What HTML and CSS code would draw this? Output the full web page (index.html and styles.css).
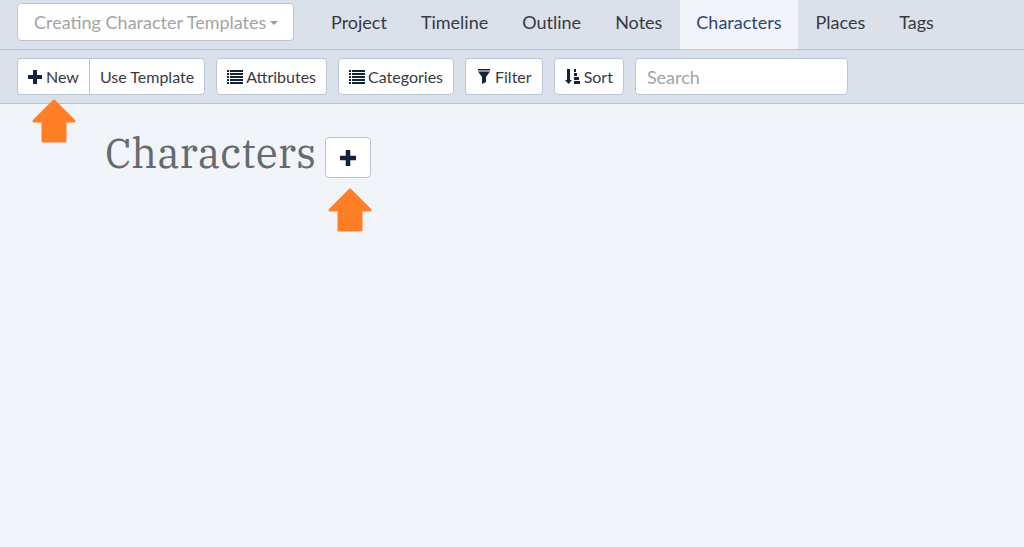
FILE: index.html
```html
<!DOCTYPE html>
<html lang="en">
<head>
  <meta charset="UTF-8">
  <title>Characters</title>
  <link rel="stylesheet" href="styles.css">
</head>
<body>
  <!-- shared icons -->
  <svg class="icon-defs" aria-hidden="true">
    <symbol id="icon-plus" viewBox="0 0 14 14">
      <path d="M5.5 0h3q.5 0 .5.5V5h4.500q.5 0 .5.5v3q0 .5-.5.5H9v4.500q0 .5-.5.5h-3q-.5 0-.5-.5V9H.5Q0 9 0 8.500v-3Q0 5 .5 5H5V.5Q5 0 5.500 0z"/>
    </symbol>
    <symbol id="icon-list" viewBox="0 0 16 14">
      <path d="M0 0h2v2H0zM3 0h13v2H3zM0 3h2v2H0zM3 3h13v2H3zM0 6h2v2H0zM3 6h13v2H3zM0 9h2v2H0zM3 9h13v2H3zM0 12h2v2H0zM3 12h13v2H3z"/>
    </symbol>
    <symbol id="icon-filter" viewBox="0 0 14 16">
      <path d="M1 0h12v1.500H1zM1 2.500h12L9 8v5l-4 2V8z"/>
    </symbol>
    <symbol id="icon-sort" viewBox="0 0 16 16">
      <path d="M2 0h3v11h2l-3.500 4L0 11h2zM9 0h2v3H9zM9 4h3v3H9zM9 8h5v3H9zM9 12h6v3H9z"/>
    </symbol>
    <symbol id="icon-arrow" viewBox="0 0 44 44">
      <path d="M22 2L42 22H33V42H11V22H2z" stroke="#ff7f27" stroke-width="3" stroke-linejoin="round"/>
    </symbol>
  </svg>

  <nav class="navbar">
    <div class="project-picker">
      <select aria-label="Project file">
        <option>Creating Character Templates</option>
      </select>
      <span class="caret"></span>
    </div>
    <div class="nav-links">
      <a href="#project">Project</a>
      <a href="#timeline">Timeline</a>
      <a href="#outline">Outline</a>
      <a href="#notes">Notes</a>
      <a href="#characters" class="active">Characters</a>
      <a href="#places">Places</a>
      <a href="#tags">Tags</a>
    </div>
  </nav>

  <div class="toolbar">
    <div class="btn-group">
      <button type="button" class="btn"><svg class="icon plus"><use href="#icon-plus"/></svg>New</button>
      <button type="button" class="btn">Use Template</button>
      <svg class="arrow arrow-new"><use href="#icon-arrow"/></svg>
    </div>
    <button type="button" class="btn"><svg class="icon list"><use href="#icon-list"/></svg>Attributes</button>
    <button type="button" class="btn"><svg class="icon list"><use href="#icon-list"/></svg>Categories</button>
    <button type="button" class="btn"><svg class="icon filter"><use href="#icon-filter"/></svg>Filter</button>
    <button type="button" class="btn"><svg class="icon sort"><use href="#icon-sort"/></svg>Sort</button>
    <input type="text" class="search" placeholder="Search" aria-label="Search">
  </div>

  <main>
    <h1>Characters</h1>
    <div class="add-character">
      <button type="button" class="btn add-btn" aria-label="Add character"><svg class="icon"><use href="#icon-plus"/></svg></button>
      <svg class="arrow arrow-add"><use href="#icon-arrow"/></svg>
    </div>
  </main>
</body>
</html>
```

FILE: styles.css
```css
* {
  box-sizing: border-box;
}

body {
  margin: 0;
  min-height: 100vh;
  background-color: #f1f5f9;
  color: #373a3f;
  font-family: Lato, sans-serif;
  font-size: 16px;
}

.icon-defs {
  display: none;
}

/* Top navigation */
.navbar {
  display: flex;
  height: 50px;
  padding: 0 17px;
  background-color: #dae1ea;
  border-bottom: 1px solid #bcc6d3;
}

.project-picker {
  position: relative;
  margin: 3px 21px 0 0;
}

.project-picker select {
  appearance: none;
  width: 277px;
  height: 38px;
  padding: 0 16px;
  background-color: #fff;
  border: 1px solid #b9c5d5;
  border-radius: 4px;
  color: #a3a3a3;
  font-family: inherit;
  font-size: 18px;
}

.caret {
  position: absolute;
  top: 18px;
  right: 16px;
  border: 4px solid transparent;
  border-top-color: #999;
  border-bottom: 0;
}

.nav-links {
  display: flex;
  gap: 2px;
}

.nav-links a {
  padding: 0 16px;
  color: #373a3f;
  font-size: 18px;
  line-height: 45px;
  text-decoration: none;
}

.nav-links .active {
  background-color: #f1f5f9;
  color: #2f4578;
}

/* Toolbar */
.toolbar {
  display: flex;
  align-items: center;
  gap: 11px;
  height: 54px;
  padding: 0 17px;
  background-color: #dae1ea;
  border-bottom: 1px solid #b4c2d2;
}

.btn {
  display: flex;
  align-items: center;
  gap: 3px;
  height: 37px;
  padding: 0 10px;
  background-color: #fff;
  border: 1px solid #b9c5d5;
  border-radius: 4px;
  color: #373a3f;
  font-family: inherit;
  font-size: 16px;
}

.btn-group {
  display: flex;
  position: relative;
}

.btn-group .btn:first-child {
  gap: 4px;
  border-radius: 4px 0 0 4px;
}

.btn-group .btn + .btn {
  margin-left: -1px;
  border-radius: 0 4px 4px 0;
}

.icon {
  width: 16px;
  height: 16px;
  fill: #14233c;
}

.icon.plus {
  width: 14px;
  height: 14px;
}

.icon.list {
  height: 14px;
}

.search {
  width: 213px;
  height: 37px;
  padding: 0 11px;
  background-color: #fff;
  border: 1px solid #b9c5d5;
  border-radius: 4px;
  font-family: inherit;
  font-size: 18px;
}

.search::placeholder {
  color: #a3a3a3;
}

/* Page content */
main {
  display: flex;
  align-items: flex-start;
  gap: 9px;
  padding: 24px 105px 60px;
}

h1 {
  margin: 0;
  color: #666a70;
  font-family: "IBM Plex Serif", "Liberation Serif", serif;
  font-size: 41px;
  font-weight: normal;
  line-height: 50px;
}

.add-character {
  position: relative;
  padding-top: 9px;
}

.add-btn {
  justify-content: center;
  width: 46px;
  height: 41px;
}

/* Orange pointers under the add buttons */
.arrow {
  position: absolute;
  width: 44px;
  height: 44px;
  fill: #ff7f27;
}

.arrow-new {
  top: 41px;
  left: 15px;
}

.arrow-add {
  top: 60px;
  left: 3px;
}
```
